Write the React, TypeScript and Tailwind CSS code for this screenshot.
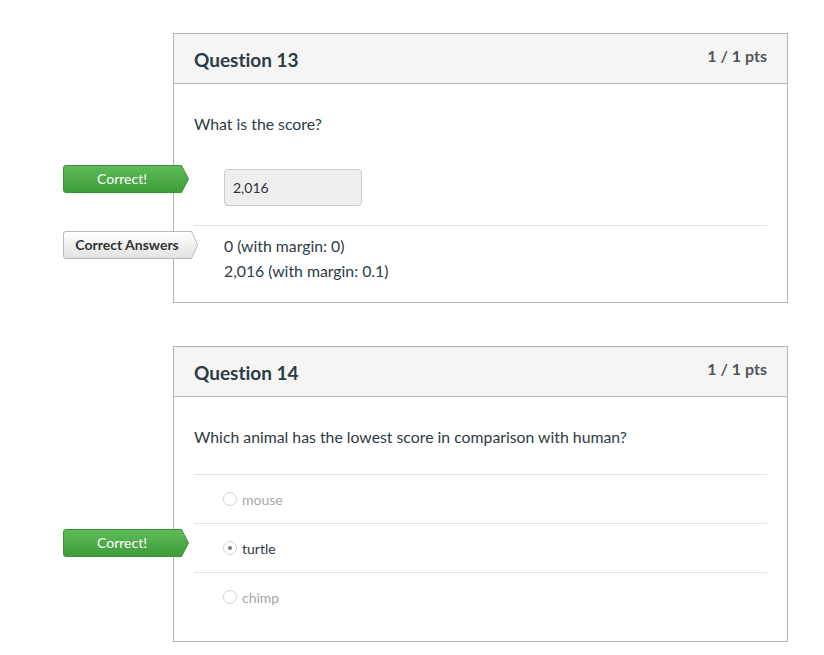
import React from "react";

function GreenTag({ top }: { top: number }) {
  return (
    <div
      className="absolute left-[-111px] w-[126px] h-[28px] flex items-center"
      style={{ top }}
    >
      <svg className="absolute inset-0" width="126" height="28" viewBox="0 0 126 28">
        <defs>
          <linearGradient id={`g${top}`} x1="0" y1="0" x2="0" y2="1">
            <stop offset="0" stopColor="#5dbb58" />
            <stop offset="1" stopColor="#3e9d3b" />
          </linearGradient>
        </defs>
        <path
          d="M3 0.5 H118.5 L125.5 14 L118.5 27.5 H3 Q0.5 27.5 0.5 25 V3 Q0.5 0.5 3 0.5 Z"
          fill={`url(#g${top})`}
          stroke="#3b913a"
          strokeWidth="1"
        />
      </svg>
      <span className="relative w-[118px] text-center text-[14px] text-white leading-none">
        Correct!
      </span>
    </div>
  );
}

function GrayTag({ top }: { top: number }) {
  return (
    <div
      className="absolute left-[-111px] w-[135px] h-[28px] flex items-center"
      style={{ top }}
    >
      <svg className="absolute inset-0" width="135" height="28" viewBox="0 0 135 28">
        <defs>
          <linearGradient id="gg" x1="0" y1="0" x2="0" y2="1">
            <stop offset="0" stopColor="#ffffff" />
            <stop offset="1" stopColor="#e2e2e2" />
          </linearGradient>
        </defs>
        <path
          d="M3 0.5 H128.5 L134.5 14 L128.5 27.5 H3 Q0.5 27.5 0.5 25 V3 Q0.5 0.5 3 0.5 Z"
          fill="url(#gg)"
          stroke="#b9b9b9"
          strokeWidth="1"
        />
      </svg>
      <span className="relative w-[128px] text-center text-[14px] font-bold text-[#333333] leading-none">
        Correct Answers
      </span>
    </div>
  );
}

function Header({ title }: { title: string }) {
  return (
    <div className="h-[50px] bg-[#f5f5f5] border-b border-[#b5b5b5] px-5 flex justify-between items-start">
      <div className="pt-[15px] text-[19px] font-bold leading-[22px] text-[#2d3b45]">{title}</div>
      <div className="pt-[12px] text-[16px] font-bold leading-[20px] text-[#555555]">1 / 1 pts</div>
    </div>
  );
}

function Radio({ checked }: { checked?: boolean }) {
  return (
    <span className="w-[14px] h-[14px] rounded-full border border-[#d4d4d4] bg-white flex items-center justify-center shrink-0">
      {checked && <span className="w-[4px] h-[4px] rounded-full bg-[#7a7a7a]" />}
    </span>
  );
}

function Option({ label, checked }: { label: string; checked?: boolean }) {
  return (
    <div className="h-[49px] border-t border-[#e3e3e3] flex items-center pl-[29px] gap-[5px]">
      <Radio checked={checked} />
      <span className={`text-[14px] ${checked ? "text-[#2d3b45]" : "text-[#a3a7aa]"}`}>{label}</span>
    </div>
  );
}

export default function App() {
  return (
    <div className="min-h-screen bg-white font-['Lato','Noto_Sans',sans-serif] text-[#2d3b45] [font-variant-ligatures:none]">
      <div className="pt-[33px] pl-[173px]">
        <div className="relative w-[615px] border border-[#b5b5b5]">
          <Header title="Question 13" />
          <GreenTag top={131} />
          <GrayTag top={197} />
          <div className="px-5 pt-[29px] pb-[19px]">
            <div className="text-[15.8px] leading-[22px]">What is the score?</div>
            <div className="mt-[34px] ml-[30px] w-[138px] h-[37px] bg-[#eeeeee] border border-[#cccccc] rounded-[4px] flex items-center pl-[8px] text-[14px] text-[#333333]">
              2,016
            </div>
            <div className="mt-[19px] border-t border-[#e3e3e3] pt-[7px] pl-[30px] text-[15.8px] leading-[25px]">
              <div>0 (with margin: 0)</div>
              <div>2,016 (with margin: 0.1)</div>
            </div>
          </div>
        </div>

        <div className="h-[43px]" />

        <div className="relative w-[615px] border border-[#b5b5b5]">
          <Header title="Question 14" />
          <GreenTag top={182} />
          <div className="px-5 pt-[29px] pb-[20px]">
            <div className="text-[15.8px] leading-[22px]">
              Which animal has the lowest score in comparison with human?
            </div>
            <div className="mt-[26px]">
              <Option label="mouse" />
              <Option label="turtle" checked />
              <Option label="chimp" />
            </div>
          </div>
        </div>
      </div>
    </div>
  );
}
